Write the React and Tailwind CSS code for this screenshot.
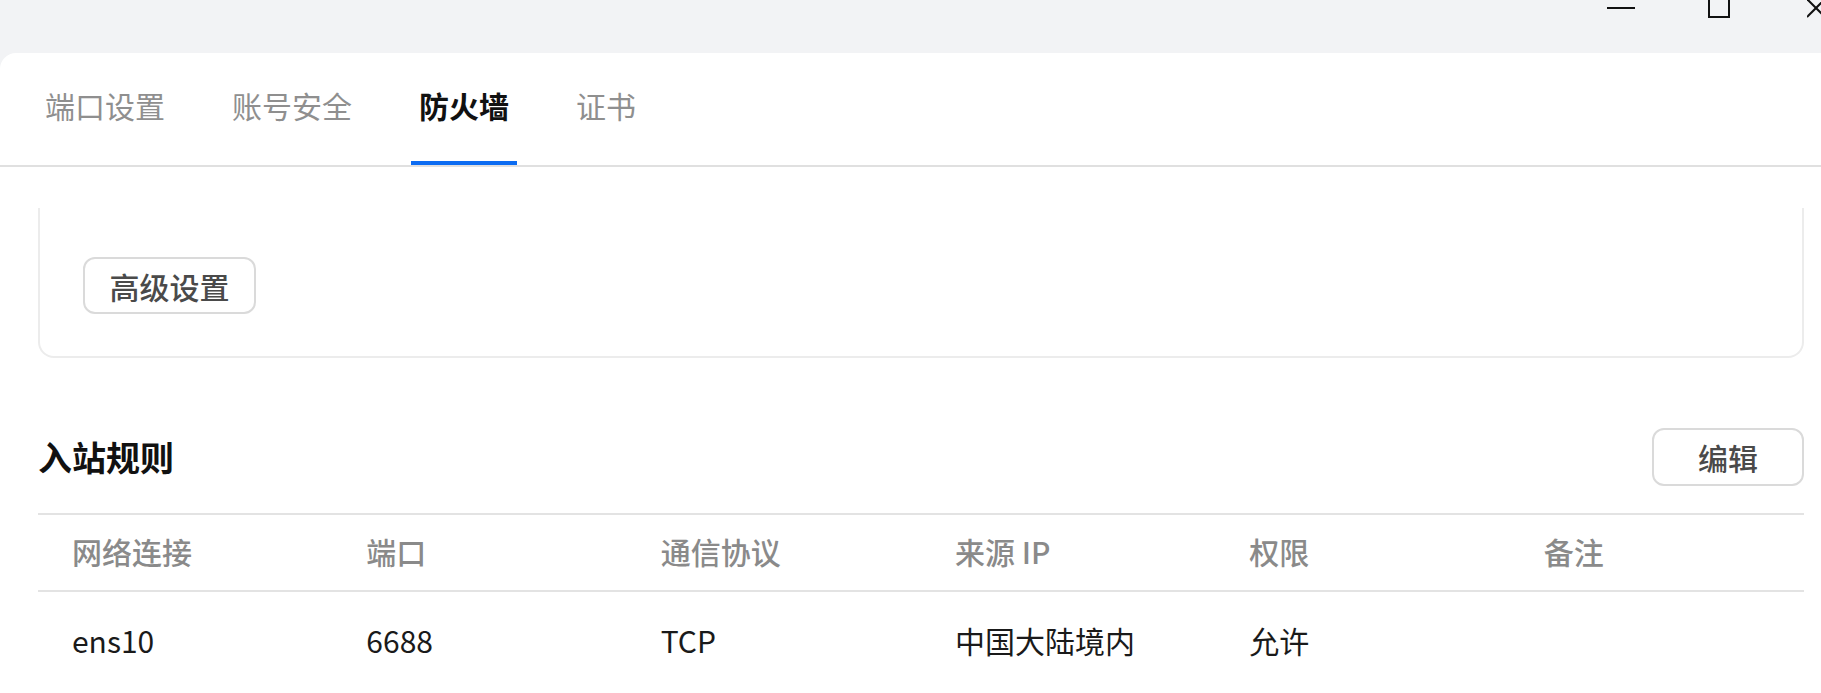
import React from 'react';

const tabs = ['端口设置', '账号安全', '防火墙', '证书'];
const columns = ['网络连接', '端口', '通信协议', '来源 IP', '权限', '备注'];
const rows = [['ens10', '6688', 'TCP', '中国大陆境内', '允许', '']];

const WindowControls = () => (
  <div className="flex h-[53px] justify-end overflow-hidden">
    <svg width="28" height="53" viewBox="0 0 28 53" className="shrink-0">
      <line x1="0" y1="8" x2="28" y2="8" stroke="#111" strokeWidth="2" />
    </svg>
    <svg width="22" height="53" viewBox="0 0 22 53" className="ml-[73px] shrink-0">
      <rect x="1" y="-6" width="20" height="23" fill="none" stroke="#111" strokeWidth="2" />
    </svg>
    <svg width="24" height="53" viewBox="0 0 24 53" className="ml-[77px] -mr-[10px] shrink-0">
      <line x1="0" y1="-1" x2="18" y2="17" stroke="#111" strokeWidth="2" />
      <line x1="18" y1="-1" x2="0" y2="17" stroke="#111" strokeWidth="2" />
    </svg>
  </div>
);

const OutlineButton = ({ children, className = '' }) => (
  <button
    className={`flex items-center justify-center rounded-xl border-2 border-[#dadada] bg-white text-[30px] font-medium leading-none text-[#4a4a4a] ${className}`}
  >
    {children}
  </button>
);

export default function App() {
  return (
    <div className="h-screen w-full overflow-hidden bg-[#f2f3f5] font-['Noto_Sans_CJK_SC','Noto_Sans',sans-serif]">
      <WindowControls />

      <div className="h-[640px] rounded-tl-2xl bg-white">
        {/* tabs */}
        <div className="flex h-[114px] gap-[51px] border-b-2 border-[#e0e0e0] pl-[37px]">
          {tabs.map((t) => {
            const active = t === '防火墙';
            return (
              <div
                key={t}
                className={`relative flex h-full items-center px-2 pb-2 text-[30px] leading-none ${
                  active ? 'font-bold text-[#111]' : 'text-[#8f8f8f]'
                }`}
              >
                {t}
                {active && <span className="absolute inset-x-0 bottom-0 h-1 bg-[#0c6cf2]" />}
              </div>
            );
          })}
        </div>

        <div className="pl-[38px] pr-[17px] pt-[41px]">
          {/* advanced settings card (top scrolled out of view) */}
          <div className="rounded-b-2xl border-2 border-t-0 border-[#ececec] pb-[42px] pl-[43px] pt-[49px]">
            <OutlineButton className="h-[57px] w-[173px]">高级设置</OutlineButton>
          </div>

          {/* inbound rules */}
          <div className="mt-[70px] flex h-[58px] items-center justify-between">
            <h2 className="text-[34px] font-bold leading-none text-[#111]">入站规则</h2>
            <OutlineButton className="h-[58px] w-[152px]">编辑</OutlineButton>
          </div>

          <div className="mt-[27px] border-t-2 border-[#e3e3e3]">
            <div className="grid h-[77px] grid-cols-6 items-center border-b-2 border-[#e3e3e3] pb-1">
              {columns.map((c) => (
                <div key={c} className="pl-[34px] text-[30px] font-medium leading-none text-[#8a8a8a]">
                  {c}
                </div>
              ))}
            </div>
            {rows.map((r, i) => (
              <div key={i} className="grid h-[96px] grid-cols-6 items-center">
                {r.map((v, j) => (
                  <div key={j} className="pl-[34px] text-[30px] leading-none text-[#1a1a1a]">
                    {v}
                  </div>
                ))}
              </div>
            ))}
          </div>
        </div>
      </div>
    </div>
  );
}
